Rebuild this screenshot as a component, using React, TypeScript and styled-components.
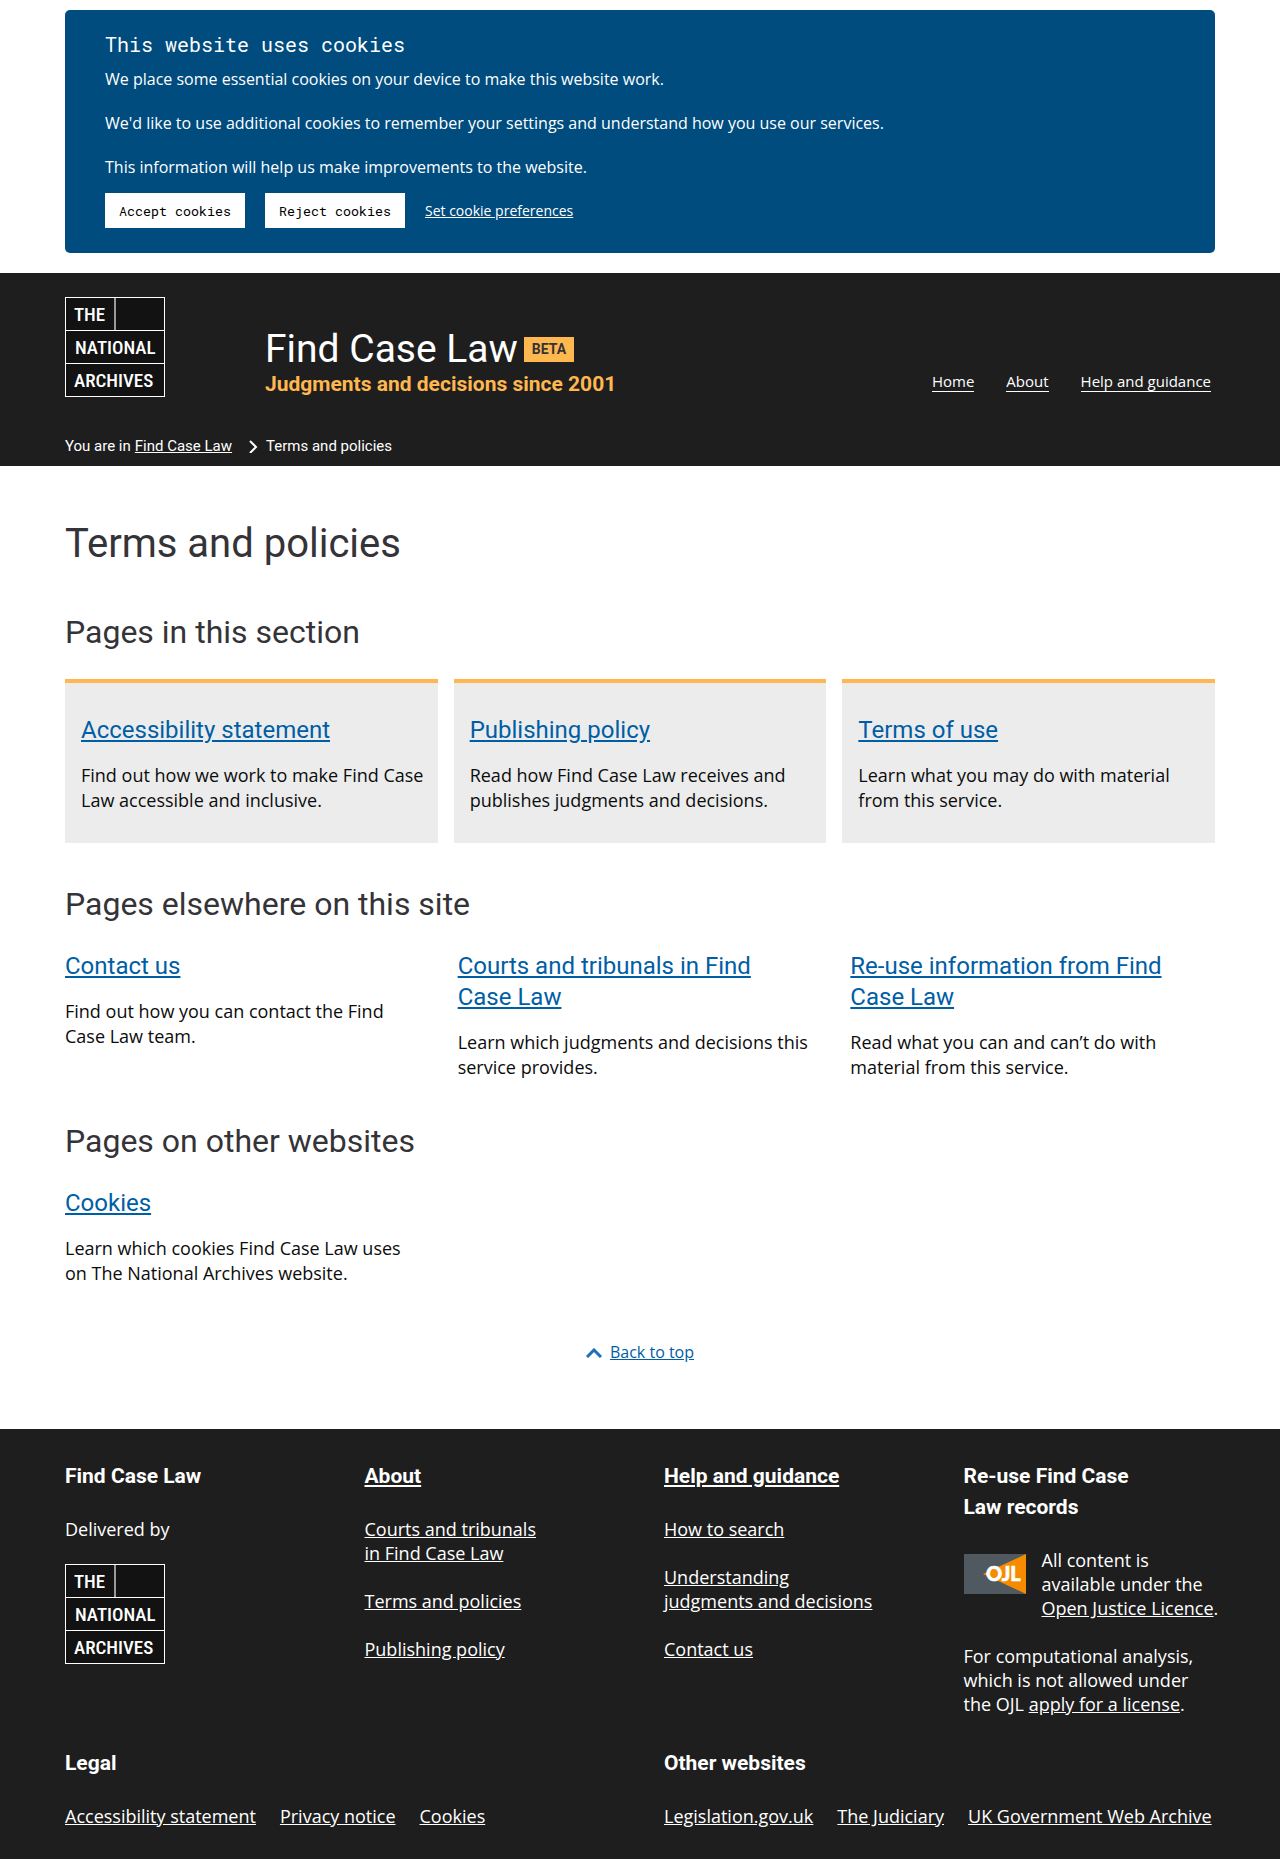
import React from "react";
import styled, { createGlobalStyle } from "styled-components";

const roboto = `Roboto, "Liberation Sans", sans-serif`;
const bodyFont = `"Open Sans", "Noto Sans", sans-serif`;
const robotoMono = `"Roboto Mono", "DejaVu Sans Mono", monospace`;

const GlobalStyle = createGlobalStyle`
  * { box-sizing: border-box; }
  body {
    margin: 0;
    background: #fff;
    color: #0b0c0c;
    font-family: ${bodyFont};
    font-size: 18px;
    line-height: 24px;
  }
  h1, h2, h3, p, ul, ol { margin: 0; padding: 0; }
  ul, ol { list-style: none; }
  a { color: inherit; }
`;

const Container = styled.div`
  max-width: 1182px;
  margin: 0 auto;
  padding: 0 16px;
`;

/* Cookie banner */
const CookieWrap = styled(Container)`
  padding-top: 10px;
  padding-bottom: 20px;
`;
const CookieBanner = styled.section`
  padding: 20px 40px 25px;
  border-radius: 5px;
  background: #004c7e;
  color: #fff;
  font-size: 16px;
  line-height: 22px;
`;
const CookieTitle = styled.h2`
  margin-bottom: 10px;
  font: 400 20px/28px ${robotoMono};
`;
const CookieText = styled.p`
  margin-bottom: 22px;
  &:last-of-type { margin-bottom: 15px; }
`;
const CookieActions = styled.div`
  display: flex;
  align-items: center;
  gap: 20px;
  font-size: 14px;
`;
const CookieButton = styled.button`
  width: 140px;
  height: 35px;
  padding: 0;
  border: 0;
  background: #fff;
  color: #000;
  font-family: ${robotoMono};
`;

/* Header */
const Header = styled.header`
  background: #1e1e1e;
  color: #fff;
`;
const HeaderMain = styled.div`
  display: flex;
  align-items: flex-end;
  padding-top: 24px;
`;
const LogoLink = styled.a`
  display: block;
  width: 100px;
  height: 100px;
`;
const Brand = styled.div`
  margin-left: 100px;
  font-family: ${roboto};
`;
const BrandName = styled.a`
  display: flex;
  align-items: center;
  gap: 6px;
  color: #fff;
  font-size: 39px;
  line-height: 46px;
  text-decoration: none;
`;
const Beta = styled.span`
  padding: 0 8px;
  background: #ffb74f;
  color: #343338;
  font-size: 14px;
  font-weight: 700;
  line-height: 25px;
`;
const Tagline = styled.p`
  color: #ffb74f;
  font-size: 21px;
  font-weight: 700;
  line-height: 25px;
`;
const Nav = styled.nav`
  margin-left: auto;
  padding: 0 4px 5px 0;
`;
const NavList = styled.ul`
  display: flex;
  gap: 32px;
  font-size: 15px;
  line-height: 20px;
`;
const NavLink = styled.a`
  display: block;
  border-bottom: 1px solid #fff;
  text-decoration: none;
`;
const Breadcrumb = styled.ol`
  display: flex;
  align-items: center;
  padding: 39px 0 10px;
  font: 400 15px/20px ${roboto};
`;
const Crumb = styled.li`
  display: flex;
  align-items: center;
  gap: 4px;
`;

/* Main */
const Main = styled(Container).attrs({ as: "main" })`
  padding-top: 51px;
  padding-bottom: 64px;
  line-height: 25px;
`;
const PageTitle = styled.h1`
  color: #343338;
  font: 400 40px/54px ${roboto};
`;
const Section = styled.section`
  padding-top: 39px;
`;
const SectionTitle = styled.h2`
  margin-bottom: 25px;
  color: #343338;
  font: 400 32px/44px ${roboto};
`;
const CardGrid = styled.ul`
  display: grid;
  grid-template-columns: repeat(3, 1fr);
  gap: 16px;
`;
const Card = styled.li`
  padding: 32px 12px 30px 16px;
  border-top: 4px solid #ffb74f;
  background: #ececec;
`;
const PlainGrid = styled.ul`
  display: grid;
  grid-template-columns: repeat(3, 1fr);
  gap: 28px;
`;
const PlainItem = styled.li`
  padding-right: 8px;
`;
const ItemTitle = styled.h3`
  margin-bottom: 17px;
  padding-right: 16px;
  color: #005ea5;
  font: 400 24px/31px ${roboto};
`;
const BackToTop = styled.div`
  display: flex;
  justify-content: center;
  align-items: center;
  gap: 8px;
  padding-top: 54px;
  color: #005ea5;
  font-size: 16px;
`;

/* Footer */
const Footer = styled.footer`
  padding: 32px 0;
  background: #1e1e1e;
  color: #fff;
`;
const FooterTop = styled.div`
  display: grid;
  grid-template-columns: repeat(4, minmax(0, 1fr));
  gap: 48px;
`;
const FooterBottom = styled.div`
  display: grid;
  grid-template-columns: repeat(2, minmax(0, 1fr));
  gap: 48px;
  padding-top: 32px;
`;
const FooterTitle = styled.h2`
  margin-bottom: 25px;
  font: 700 21px/31px ${roboto};
  text-wrap: balance;
`;
const FooterList = styled.ul`
  display: grid;
  gap: 24px;
  text-wrap: balance;
`;
const FooterRow = styled.ul`
  display: flex;
  gap: 24px;
  white-space: nowrap;
`;
const Delivered = styled.p`
  margin-bottom: 23px;
`;
const Licence = styled.div`
  display: flex;
  align-items: flex-start;
  gap: 16px;
  margin-bottom: 24px;
  svg { flex: none; margin-top: 6px; }
`;
const NoWrap = styled.span`
  white-space: nowrap;
`;

const ArchivesLogo = () => (
  <svg width="100" height="100" viewBox="0 0 100 100" role="img" aria-label="The National Archives">
    <rect x="0.5" y="0.5" width="99" height="99" fill="#121212" stroke="#fff" />
    <path d="M0 33.5H100M0 66.5H100" stroke="#fff" />
    <path d="M50 1V33" stroke="#999" strokeWidth="2" />
    <g fill="#fff" fontFamily={`"Roboto Condensed", ${roboto}`} fontWeight="500" fontSize="19">
      <text x="9" y="24">THE</text>
      <text x="10" y="57">NATIONAL</text>
      <text x="9" y="90">ARCHIVES</text>
    </g>
  </svg>
);

const OjlLogo = () => (
  <svg width="62" height="40" viewBox="0 0 62 40" role="img" aria-label="Open Justice Licence">
    <rect width="62" height="40" fill="#50595f" />
    <path d="M62 0V40L19 20Z" fill="#f68b00" />
    <text x="22" y="27" fill="#fff" stroke="#fff" strokeWidth="0.6" fontFamily="Lato, sans-serif" fontWeight="900" fontSize="20">OJL</text>
  </svg>
);

type Item = { title: string; text: string };

const inSection: Item[] = [
  { title: "Accessibility statement", text: "Find out how we work to make Find Case Law accessible and inclusive." },
  { title: "Publishing policy", text: "Read how Find Case Law receives and publishes judgments and decisions." },
  { title: "Terms of use", text: "Learn what you may do with material from this service." },
];
const elsewhere: Item[] = [
  { title: "Contact us", text: "Find out how you can contact the Find Case Law team." },
  { title: "Courts and tribunals in Find Case Law", text: "Learn which judgments and decisions this service provides." },
  { title: "Re-use information from Find Case Law", text: "Read what you can and can’t do with material from this service." },
];
const otherSites: Item[] = [
  { title: "Cookies", text: "Learn which cookies Find Case Law uses on The National Archives website." },
];

const ItemBody = ({ title, text }: Item) => (
  <>
    <ItemTitle><a href="#">{title}</a></ItemTitle>
    <p>{text}</p>
  </>
);

const links = (names: string[]) =>
  names.map((name) => <li key={name}><a href="#">{name}</a></li>);

export default function App() {
  return (
    <>
      <GlobalStyle />
      <CookieWrap>
        <CookieBanner>
          <CookieTitle>This website uses cookies</CookieTitle>
          <CookieText>We place some essential cookies on your device to make this website work.</CookieText>
          <CookieText>We'd like to use additional cookies to remember your settings and understand how you use our services.</CookieText>
          <CookieText>This information will help us make improvements to the website.</CookieText>
          <CookieActions>
            <CookieButton type="button">Accept cookies</CookieButton>
            <CookieButton type="button">Reject cookies</CookieButton>
            <a href="#">Set cookie preferences</a>
          </CookieActions>
        </CookieBanner>
      </CookieWrap>

      <Header>
        <Container>
          <HeaderMain>
            <LogoLink href="#"><ArchivesLogo /></LogoLink>
            <Brand>
              <BrandName href="#">Find Case Law <Beta>BETA</Beta></BrandName>
              <Tagline>Judgments and decisions since 2001</Tagline>
            </Brand>
            <Nav>
              <NavList>
                {["Home", "About", "Help and guidance"].map((name) => (
                  <li key={name}><NavLink href="#">{name}</NavLink></li>
                ))}
              </NavList>
            </Nav>
          </HeaderMain>
          <Breadcrumb>
            <Crumb>
              You are in <a href="#">Find Case Law</a>
              <svg width="30" height="14" viewBox="0 0 30 14" fill="none" stroke="#fff" strokeWidth="2" aria-hidden="true">
                <path d="M14 2L20 8L14 14" />
              </svg>
            </Crumb>
            <Crumb>Terms and policies</Crumb>
          </Breadcrumb>
        </Container>
      </Header>

      <Main>
        <PageTitle>Terms and policies</PageTitle>
        <Section>
          <SectionTitle>Pages in this section</SectionTitle>
          <CardGrid>
            {inSection.map((item) => <Card key={item.title}><ItemBody {...item} /></Card>)}
          </CardGrid>
        </Section>
        <Section>
          <SectionTitle>Pages elsewhere on this site</SectionTitle>
          <PlainGrid>
            {elsewhere.map((item) => <PlainItem key={item.title}><ItemBody {...item} /></PlainItem>)}
          </PlainGrid>
        </Section>
        <Section>
          <SectionTitle>Pages on other websites</SectionTitle>
          <PlainGrid>
            {otherSites.map((item) => <PlainItem key={item.title}><ItemBody {...item} /></PlainItem>)}
          </PlainGrid>
        </Section>
        <BackToTop>
          <svg width="16" height="10" viewBox="0 0 16 10" fill="none" stroke="#1d70b8" strokeWidth="3" aria-hidden="true">
            <path d="M1 9L8 2L15 9" />
          </svg>
          <a href="#">Back to top</a>
        </BackToTop>
      </Main>

      <Footer>
        <Container>
          <FooterTop>
            <div>
              <FooterTitle>Find Case Law</FooterTitle>
              <Delivered>Delivered by</Delivered>
              <LogoLink href="#"><ArchivesLogo /></LogoLink>
            </div>
            <div>
              <FooterTitle><a href="#">About</a></FooterTitle>
              <FooterList>{links(["Courts and tribunals in Find Case Law", "Terms and policies", "Publishing policy"])}</FooterList>
            </div>
            <div>
              <FooterTitle><a href="#">Help and guidance</a></FooterTitle>
              <FooterList>{links(["How to search", "Understanding judgments and decisions", "Contact us"])}</FooterList>
            </div>
            <div>
              <FooterTitle>Re-use Find Case Law records</FooterTitle>
              <Licence>
                <OjlLogo />
                <p>All content is available under the <NoWrap><a href="#">Open Justice Licence</a>.</NoWrap></p>
              </Licence>
              <p>For computational analysis, which is not allowed under the OJL <a href="#">apply for a license</a>.</p>
            </div>
          </FooterTop>
          <FooterBottom>
            <div>
              <FooterTitle>Legal</FooterTitle>
              <FooterRow>{links(["Accessibility statement", "Privacy notice", "Cookies"])}</FooterRow>
            </div>
            <div>
              <FooterTitle>Other websites</FooterTitle>
              <FooterRow>{links(["Legislation.gov.uk", "The Judiciary", "UK Government Web Archive"])}</FooterRow>
            </div>
          </FooterBottom>
        </Container>
      </Footer>
    </>
  );
}
